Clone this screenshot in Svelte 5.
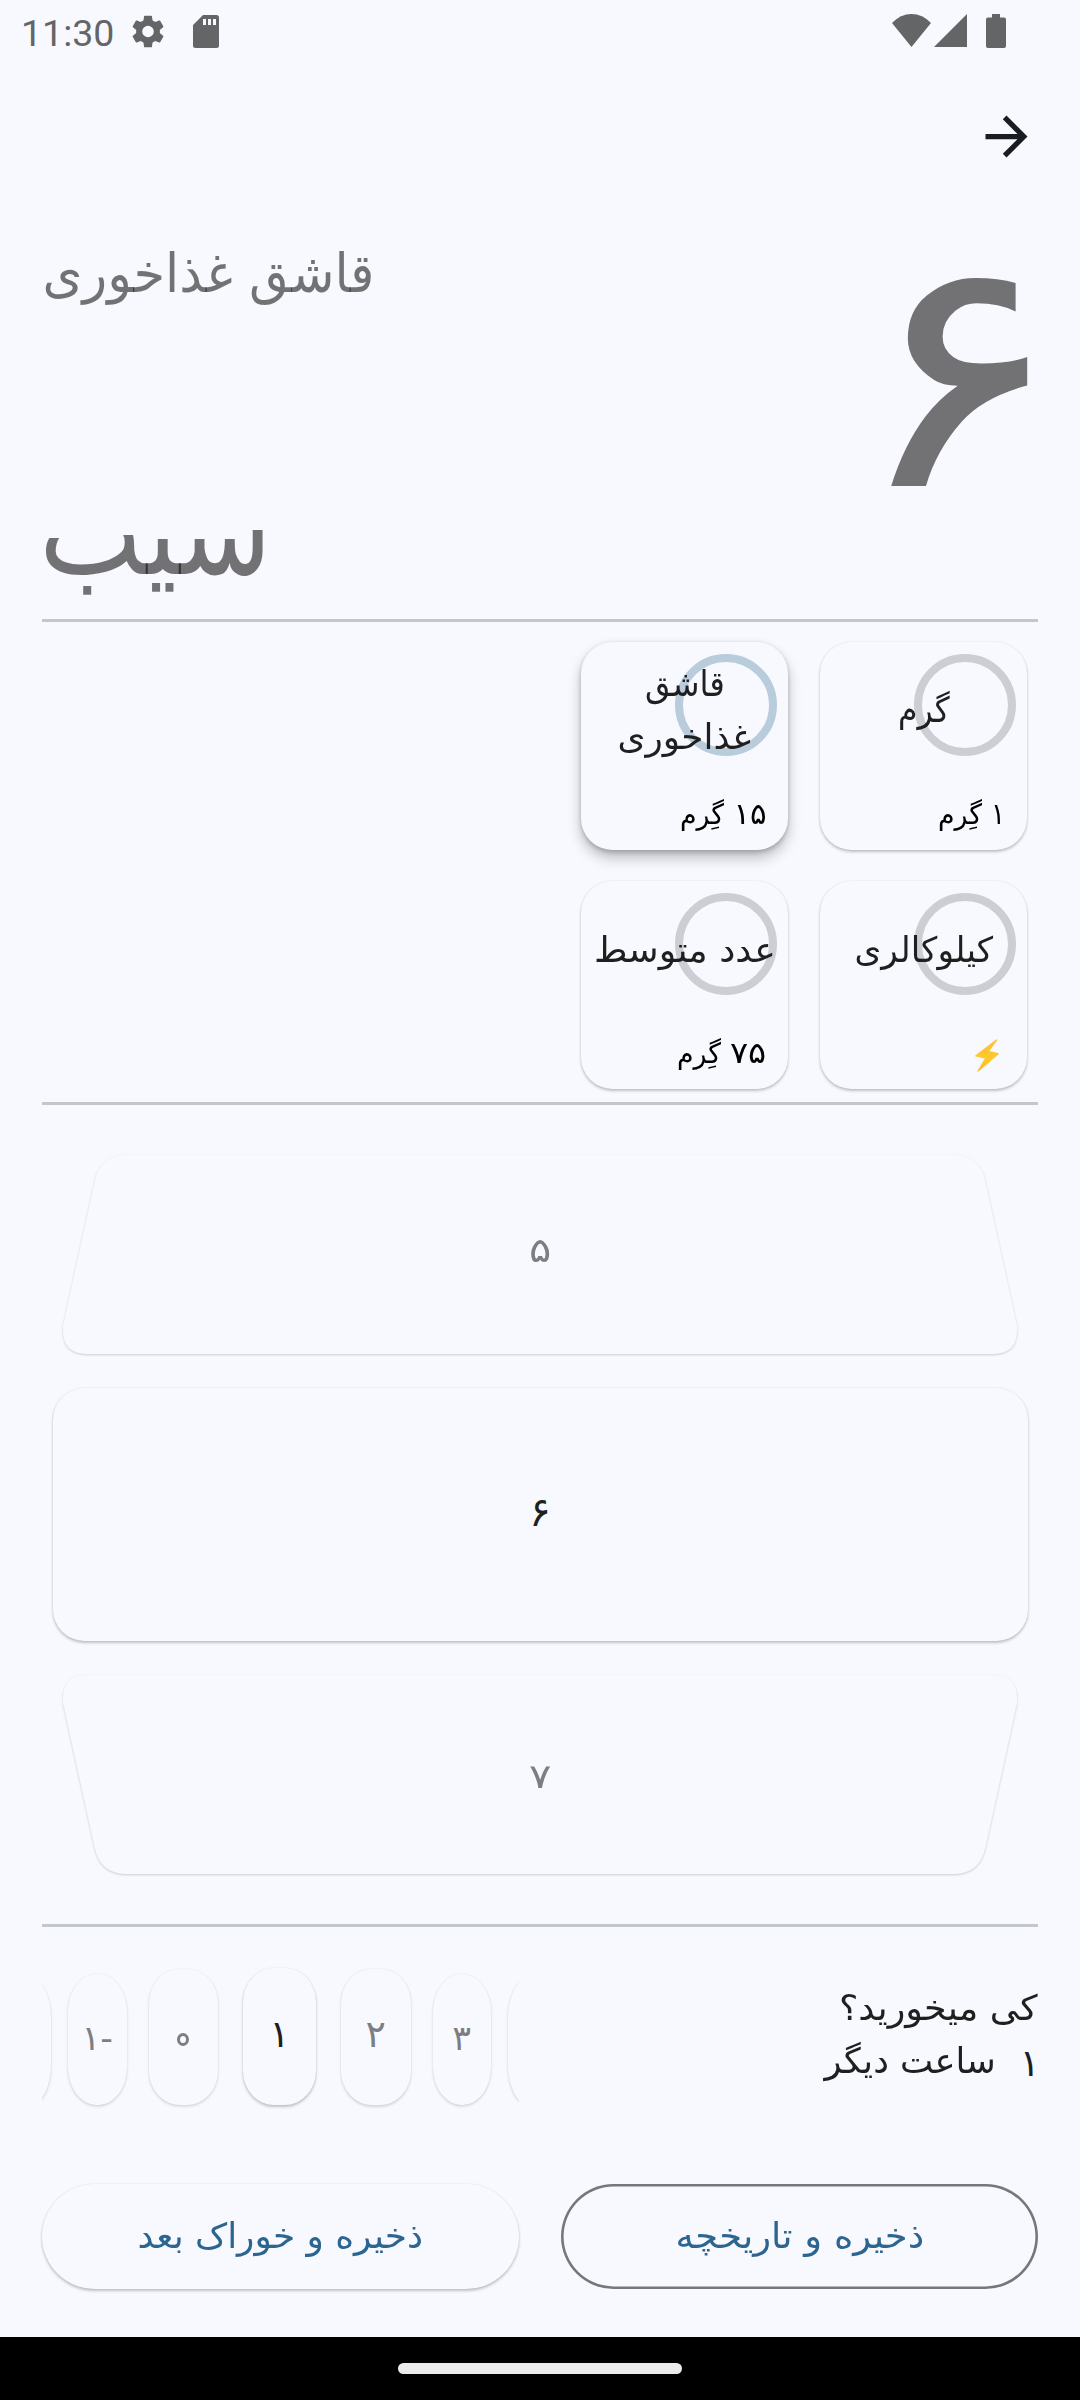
<script>
  const units = [
    { lines: [['گرم', 52]], count: ['۱', 14], selected: false },
    { lines: [['قاشق', 80], ['غذاخوری', 133]], count: ['۱۵', 33], selected: true },
    { lines: [['کیلوکالری', 139]], selected: false },
    { lines: [['عدد متوسط', 182]], count: ['۷۵', 36], selected: false }
  ];

  const hours = [
    { label: '', kind: 'edge first' },
    { label: '-۱', kind: 'far' },
    { label: '۰', kind: 'near zero' },
    { label: '۱', kind: 'current' },
    { label: '۲', kind: 'near' },
    { label: '۳', kind: 'far' },
    { label: '', kind: 'edge last' }
  ];

  // Stretches a label horizontally so that it takes up exactly `width` pixels.
  function fit(node, width) {
    const natural = node.offsetWidth;
    node.style.transform = `scaleX(${width / natural})`;
    node.style.marginInline = `${(width - natural) / 2}px`;
  }
</script>

<div class="screen" dir="rtl">
  <header class="status" dir="ltr">
    <span class="time">11:30</span>
    <svg class="gear" viewBox="2.4 2 19.2 20"><path d="M19.14 12.94c.04-.3.06-.61.06-.94 0-.32-.02-.64-.07-.94l2.03-1.58a.49.49 0 0 0 .12-.61l-1.92-3.32a.488.488 0 0 0-.59-.22l-2.39.96c-.5-.38-1.03-.7-1.62-.94l-.36-2.54a.484.484 0 0 0-.48-.41h-3.84c-.24 0-.43.17-.47.41l-.36 2.54c-.59.24-1.13.57-1.62.94l-2.39-.96c-.22-.08-.47 0-.59.22L2.740 8.870c-.12.21-.08.47.12.61l2.03 1.58c-.05.3-.09.63-.09.94s.02.64.07.94l-2.03 1.58a.49.49 0 0 0-.12.61l1.92 3.32c.12.22.37.29.59.22l2.39-.96c.5.38 1.03.7 1.620.94l.36 2.54c.05.24.24.41.48.41h3.84c.24 0 .44-.17.47-.41l.36-2.54c.59-.24 1.13-.56 1.62-.94l2.39.96c.22.08.47 0 .59-.22l1.92-3.32c.12-.22.07-.47-.12-.61l-2.01-1.58zM12 15.500A3.500 3.500 0 1 1 12 8.500a3.500 3.500 0 0 1 0 7z" /></svg>
    <svg class="sd" viewBox="0 0 26 33"><path d="M10 0H23.5Q26 0 26 2.5V30.500Q26 33 23.500 33H2.500Q0 33 0 30.500V10ZM10 4V10H13V4ZM15 4V10H18V4ZM20 4V10H23V4Z" fill-rule="evenodd" /></svg>
    <span class="grow"></span>
    <svg class="wifi" viewBox="0 0 39 33"><path d="M0 9Q8.500 0 19.500 0T39 9L19.500 33Z" /></svg>
    <svg class="signal" viewBox="0 0 33 33"><path d="M33 0V33H0Z" /></svg>
    <svg class="battery" viewBox="0 0 20 34"><path d="M6 0H14V3.500H18Q20 3.500 20 5.500V32Q20 34 18 34H2Q0 34 0 32V5.500Q0 3.500 2 3.500H6Z" /></svg>
  </header>

  <div class="appbar">
    <svg viewBox="0 0 24 24"><path d="M12 4l-1.410 1.410L16.170 11H4v2h12.170l-5.580 5.590L12 20l8-8z" /></svg>
  </div>

  <section class="summary">
    <div class="amount"><span use:fit={213}>۶</span></div>
    <div class="names">
      <div class="unit"><span use:fit={332}>قاشق غذاخوری</span></div>
      <div class="food"><span use:fit={233}>سیب</span></div>
    </div>
  </section>

  <hr />

  <section class="units">
    {#each units as unit}
      <div class="card" class:selected={unit.selected}>
        <i class="ring"></i>
        <div class="title">
          {#each unit.lines as [text, width]}
            <div><span use:fit={width}>{text}</span></div>
          {/each}
        </div>
        <div class="sub">
          {#if unit.count}
            <span class="count" use:fit={unit.count[1]}>{unit.count[0]}</span>
            <span use:fit={44}>گِرم</span>
          {:else}
            <svg class="bolt" viewBox="0 0 24 33">
              <defs>
                <linearGradient id="boltFill" x1="0" y1="0" x2="0" y2="1">
                  <stop offset="0" stop-color="#fdbf3a" />
                  <stop offset=".6" stop-color="#ffca28" />
                  <stop offset="1" stop-color="#f9b92c" />
                </linearGradient>
              </defs>
              <path d="M21.500 0.300L0.500 16.300Q-.2 17.300 1 17.600L9.800 19.600L2.300 32.200Q2.600 33 3.800 32.200L23.700 15.300Q24.200 14.300 23 14L14.500 12L22.300 1Q22.300 0 21.500 .3Z" fill="url(#boltFill)" />
            </svg>
          {/if}
        </div>
      </div>
    {/each}
  </section>

  <hr />

  <section class="wheel">
    <div class="slot side">
      <svg class="upper" viewBox="0 0 956 199"><path d="M62 0H894Q918 2 923 25L955 171Q957 199 931 199H25Q-1 199 1 171L33 25Q38 2 62 0Z" /></svg>
      <span class="previous" use:fit={22}>۵</span>
    </div>
    <div class="slot center"><span>۶</span></div>
    <div class="slot side">
      <svg class="lower" viewBox="0 0 956 199"><path d="M62 199H894Q918 197 923 174L955 28Q957 0 931 0H25Q-1 0 1 28L33 174Q38 197 62 199Z" /></svg>
      <span class="next" use:fit={22}>۷</span>
    </div>
  </section>

  <hr />

  <section class="when">
    <div class="question">
      <div><span use:fit={199}>کی میخورید؟</span></div>
      <div class="answer"><b>۱</b><span use:fit={171}>ساعت دیگر</span></div>
    </div>
    <div class="hours" dir="ltr">
      {#each hours as hour}
        <div class="pill {hour.kind}"><span dir="rtl">{hour.label}</span></div>
      {/each}
    </div>
  </section>

  <section class="actions">
    <button class="outlined"><span use:fit={249}>ذخیره و تاریخچه</span></button>
    <button class="raised"><span use:fit={285}>ذخیره و خوراک بعد</span></button>
  </section>

  <footer class="nav"><i></i></footer>
</div>

<style>
  :global(body) {
    margin: 0;
    background: #f8f9ff;
  }
  .screen {
    width: 1080px;
    height: 2400px;
    display: flex;
    flex-direction: column;
    overflow: hidden;
    background: #f8f9ff;
    color: #1f1f1f;
    font-family: 'DejaVu Sans', sans-serif;
    font-size: 35px;
  }
  span {
    display: inline-block;
    white-space: nowrap;
  }
  svg {
    display: block;
    flex: none;
  }
  hr {
    width: 996px;
    height: 2.6px;
    margin: 0 42px;
    border: 0;
    flex: none;
    background: #c2c7cc;
  }

  .status {
    height: 63px;
    flex: none;
    box-sizing: border-box;
    padding: 14px 74px 0 21px;
    display: flex;
    align-items: flex-start;
    color: #646567;
    fill: #646567;
  }
  .time {
    width: 111px;
    font: 37.500px/38px Roboto, sans-serif;
  }
  .gear { width: 32px; height: 33px; margin-top: 1px; }
  .sd { width: 26px; height: 33px; margin: 1px 0 0 29px; }
  .grow { flex: 1; }
  .wifi { width: 39px; height: 33px; }
  .signal { width: 33px; height: 33px; margin-left: 3px; }
  .battery { width: 20px; height: 34px; margin-left: 19px; }

  .appbar {
    height: 147px;
    flex: none;
    display: flex;
    align-items: center;
    padding: 0 42.5px;
  }
  .appbar svg {
    width: 63px;
    height: 63px;
    fill: #191c20;
  }

  .summary {
    height: 409.400px;
    flex: none;
    padding: 0 42px;
    display: flex;
    justify-content: space-between;
    color: rgba(0, 0, 0, 0.54);
  }
  .amount {
    margin-right: -26px;
    font-size: 325px;
    line-height: 327px;
  }
  .names {
    display: flex;
    flex-direction: column;
    justify-content: space-between;
    align-items: flex-end;
    padding-top: 30px;
  }
  .unit {
    font-size: 54px;
    line-height: 67px;
  }
  .food {
    margin-left: -3px;
    font-size: 120px;
    line-height: 172px;
  }

  .units {
    height: 480.400px;
    flex: none;
    box-sizing: border-box;
    padding: 20px 52.700px 0;
    display: grid;
    grid-template-columns: 207.600px 207.600px;
    grid-auto-rows: 208px;
    gap: 31.400px;
  }
  .card {
    position: relative;
    border-radius: 31.500px;
    background: #f8f9ff;
    box-shadow: 0 2px 3px rgba(0, 0, 0, 0.22), 0 0 2px rgba(0, 0, 0, 0.1);
  }
  .card.selected {
    box-shadow: 0 8px 14px rgba(0, 0, 0, 0.24), 0 3px 4px rgba(0, 0, 0, 0.14), 0 0 4px rgba(0, 0, 0, 0.08);
  }
  .ring {
    position: absolute;
    top: 12px;
    right: 11.500px;
    width: 86px;
    height: 86px;
    border: 8px solid #cdced3;
    border-radius: 50%;
  }
  .selected .ring { border-color: #b8ccdc; }
  .title {
    position: relative;
    height: 138px;
    display: flex;
    flex-direction: column;
    align-items: center;
    justify-content: center;
    line-height: 53px;
  }
  .sub {
    height: 62px;
    padding: 4px 22px 0;
    display: flex;
    align-items: baseline;
    gap: 9px;
    color: #000;
    font-size: 28px;
    line-height: 60px;
  }
  .count { font-size: 30px; }
  .bolt {
    width: 24px;
    height: 33px;
    margin: 16px 6px 0;
  }

  .wheel {
    height: 819.400px;
    flex: none;
    box-sizing: border-box;
    padding: 50px 52.500px;
    display: flex;
    flex-direction: column;
    gap: 34.500px;
  }
  .slot {
    display: grid;
    place-items: center;
  }
  .slot svg, .slot span { grid-area: 1 / 1; }
  .slot span {
    z-index: 1;
    padding-bottom: 6px;
  }
  .slot .previous { padding-bottom: 9px; }
  .slot .next { padding: 3px 0 0; }
  .side {
    height: 199px;
    color: #7d7e82;
    font-size: 34px;
  }
  .side svg {
    width: 956px;
    height: 199px;
    overflow: visible;
    fill: #f8f9ff;
    filter: drop-shadow(0 1.500px 1.200px rgba(0, 0, 0, 0.18));
  }
  .center {
    height: 252.500px;
    border-radius: 31.500px;
    background: #f8f9ff;
    box-shadow: 0 2px 3px rgba(0, 0, 0, 0.22), 0 0 2px rgba(0, 0, 0, 0.1);
    font-size: 40px;
  }

  .when {
    height: 257px;
    flex: none;
    display: flex;
    justify-content: space-between;
    padding: 0 42px;
  }
  .question {
    padding-top: 55px;
    line-height: 53px;
  }
  .answer {
    display: flex;
    gap: 24px;
  }
  .answer b {
    margin-right: -2px;
    font-size: 38px;
    font-weight: 400;
    padding-top: 2px;
  }
  .hours {
    width: 477px;
    height: 190px;
    overflow: hidden;
    display: flex;
    align-items: flex-end;
    font-size: 38px;
  }
  .pill {
    flex: none;
    box-sizing: border-box;
    margin-bottom: 12px;
    padding-bottom: 5px;
    display: flex;
    justify-content: center;
    align-items: center;
    border-radius: 31px / 34px;
    box-shadow: 0 1.500px 3px rgba(0, 0, 0, 0.14), 0 0 1.500px rgba(0, 0, 0, 0.08);
    color: #7d7e82;
  }
  .current {
    width: 73px;
    height: 137px;
    margin-inline: 25px;
    color: #1f1f1f;
    box-shadow: 0 2px 3px rgba(0, 0, 0, 0.22), 0 0 2px rgba(0, 0, 0, 0.1);
  }
  .near { width: 69.500px; height: 136px; }
  /* The zero is shown as an open ring, as in Persian book type. */
  .zero span {
    box-sizing: border-box;
    width: 12px;
    height: 13px;
    margin: 10px 0 0 -1px;
    border: 3px solid #7d7e82;
    border-radius: 50%;
    color: transparent;
    font-size: 6px;
    line-height: 7px;
  }
  .far {
    width: 58.500px;
    height: 131px;
    padding-bottom: 3px;
    border-radius: 28px / 38px;
    margin-inline: 17px 22px;
    font-size: 35px;
  }
  .near + .far { margin-inline: 22px 17px; }
  .edge {
    width: 42px;
    height: 127px;
    border-radius: 21px / 40px;
  }
  .first { margin-left: -33px; }

  .actions {
    height: 105px;
    flex: none;
    padding: 0 42px;
    display: flex;
    gap: 42px;
  }
  button {
    flex: 1;
    border: 0;
    padding: 0;
    border-radius: 53px;
    background: #f8f9ff;
    color: #2c658f;
    font: inherit;
    line-height: 53px;
  }
  .outlined { box-shadow: inset 0 0 0 2.600px #72787e; }
  .raised { box-shadow: 0 2px 3px rgba(0, 0, 0, 0.22), 0 0 2px rgba(0, 0, 0, 0.1); }

  .nav {
    margin-top: auto;
    height: 63px;
    flex: none;
    display: flex;
    justify-content: center;
    align-items: center;
    background: #000;
  }
  .nav i {
    width: 284px;
    height: 11px;
    border-radius: 6px;
    background: #ececec;
  }
</style>
